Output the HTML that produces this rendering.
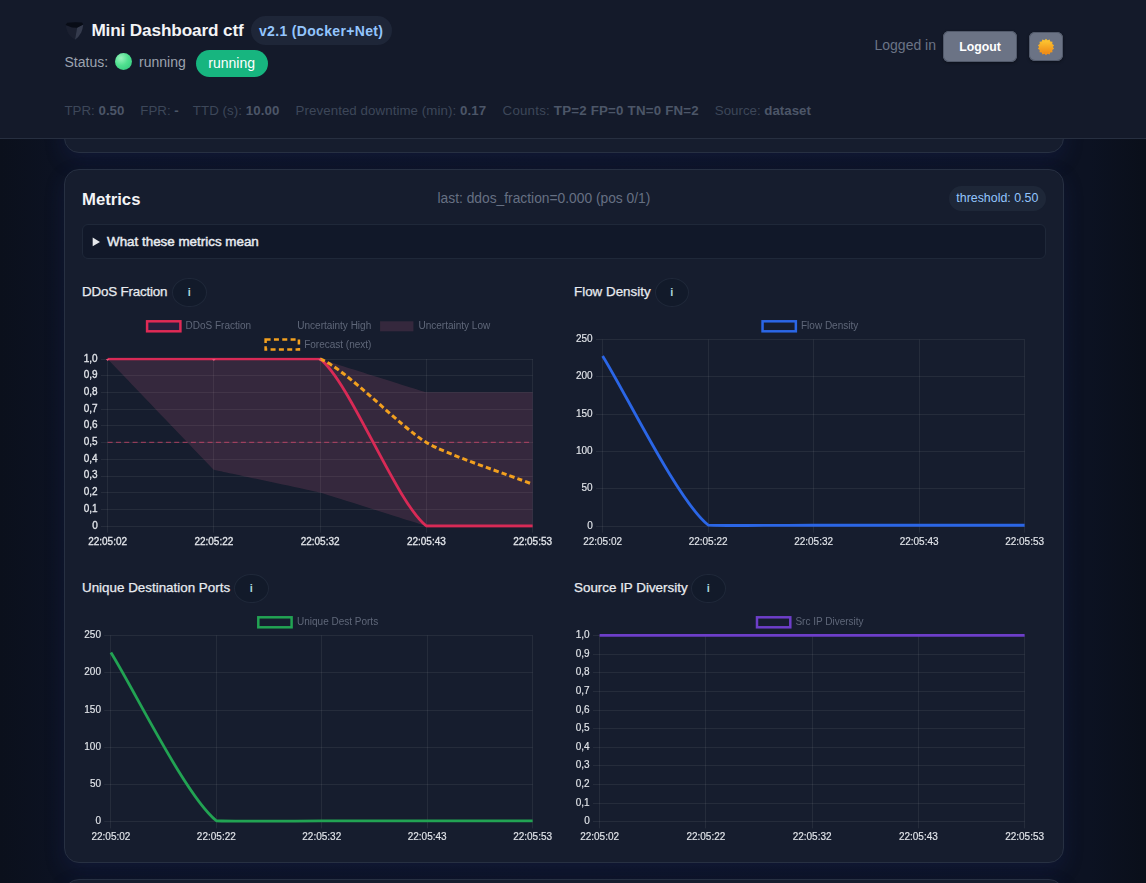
<!DOCTYPE html>
<html lang="en">
<head>
<meta charset="utf-8">
<title>Mini Dashboard ctf</title>
<style>
*{box-sizing:border-box;margin:0;padding:0}
html,body{width:1146px;height:883px;overflow:hidden}
body{position:relative;background:#0c1221;font-family:"Liberation Sans",sans-serif;color:#e5e7eb}
.abs{position:absolute;white-space:nowrap}
#bg{position:absolute;left:0;top:0;width:1146px;height:883px;background:linear-gradient(90deg,#0b101c 0%,#0c1222 5%,#0d1324 50%,#0c1222 95%,#0a0f1a 100%)}
#header{position:absolute;left:0;top:0;width:1146px;height:139px;background:#141a2a;border-bottom:1px solid #272f40}
.card{position:absolute;left:64px;width:1000px;background:#161d2e;border:1px solid #273042;border-radius:15px;box-shadow:0 8px 20px rgba(32,46,120,0.22)}
.abs b{font-weight:700;color:#4c5668}
.st{top:101px;font-size:13.3px;line-height:20px;color:#3d4759}
.ct{font-size:13.4px;line-height:20px;color:#e8ebf0;-webkit-text-stroke:0.25px #e8ebf0}
.ib{width:34.5px;height:29.5px;border-radius:50%;background:#121a2a;border:1px solid #1f2839}
.it{width:34.5px;text-align:center;font-size:11px;line-height:20px;color:#a9d4dc;font-weight:700}
</style>
</head>
<body>
<div id="bg"></div>
<div class="card" style="top:100px;height:53px"></div>
<div class="card" id="metrics" style="top:169px;height:694px"></div>
<div class="card" style="top:879px;height:60px"></div>
<div id="header"></div>
<div id="hdr">
<svg class="abs" style="left:64px;top:20px" width="21" height="21" viewBox="0 0 21 21"><path d="M1.6,5 L13.2,7.2 L11,19.8 Q5.5,16.5 3.6,12 Q2.2,8.5 1.6,5Z" fill="#1b2030"/><path d="M13.2,7.2 L19.3,4.6 Q18.8,9 17.2,12.6 Q15,17 11,19.8Z" fill="#353b4d"/><path d="M1.6,5 L3.2,2.8 Q10.5,1.6 18,2.6 L19.3,4.6 L13.2,7.8 L8,7.4Z" fill="#080c16"/></svg>
<div class="abs" id="title" style="left:91.4px;top:20px;font-size:17.2px;letter-spacing:-0.14px;font-weight:700;line-height:20px;color:#f3f4f6">Mini Dashboard ctf</div>
<div class="abs" id="vpill" style="left:251px;top:16px;width:141px;height:29px;border-radius:15px;background:#1e2638"></div>
<div class="abs" id="vtext" style="left:259px;top:21px;font-size:14px;letter-spacing:0.33px;font-weight:700;line-height:20px;color:#93c5fd">v2.1 (Docker+Net)</div>
<div class="abs" id="status" style="left:64.5px;top:52px;font-size:14px;line-height:20px;color:#9ca3af">Status:</div>
<div class="abs" id="dot" style="left:114.5px;top:52.5px;width:17px;height:17px;border-radius:50%;background:radial-gradient(circle at 35% 30%,#9af3bd 0%,#4fe08f 45%,#2fc47a 100%)"></div>
<div class="abs" id="run1" style="left:139px;top:52px;font-size:14px;line-height:20px;color:#9ca3af">running</div>
<div class="abs" id="gpill" style="left:196px;top:50px;width:72px;height:27px;border-radius:14px;background:#17b57f"></div>
<div class="abs" id="run2" style="left:208.3px;top:52.6px;font-size:14px;line-height:20px;color:#fff">running</div>
<div id="stats"><span class="abs st" style="left:64.5px">TPR: <b>0.50</b></span><span class="abs st" style="left:140.3px">FPR: <b>-</b></span><span class="abs st" style="left:192.8px;letter-spacing:0.06px">TTD (s): <b>10.00</b></span><span class="abs st" style="left:295.6px;letter-spacing:0.07px">Prevented downtime (min): <b>0.17</b></span><span class="abs st" style="left:502.6px;letter-spacing:0.21px">Counts: <b>TP=2 FP=0 TN=0 FN=2</b></span><span class="abs st" style="left:714.8px">Source: <b>dataset</b></span></div>
<div class="abs" id="logged" style="left:874.5px;top:35px;font-size:14px;line-height:20px;color:#6b7486">Logged in</div>
<div class="abs" id="logout" style="left:943px;top:31px;width:74px;height:31px;border-radius:6px;background:#6b7385;box-shadow:0 0 0 1px #525a6b inset, 0 1px 3px rgba(0,0,0,.4)"></div>
<div class="abs" id="logouttxt" style="left:943px;top:37px;width:74px;text-align:center;font-size:12.3px;font-weight:700;line-height:20px;color:#fff">Logout</div>
<div class="abs" id="sunbtn" style="left:1029px;top:32px;width:34px;height:29px;border-radius:6px;background:#6b7385;box-shadow:0 0 0 1px #525a6b inset, 0 1px 3px rgba(0,0,0,.4)"></div>
<svg class="abs" style="left:1036.8px;top:37.5px" width="18" height="18" viewBox="-9 -9 18 18"><defs><linearGradient id="sg" x1="0" y1="0" x2="0" y2="1"><stop offset="0" stop-color="#fcc531"/><stop offset="1" stop-color="#ef8a17"/></linearGradient></defs><polygon points="0.00,-8.30 1.54,-6.73 3.60,-7.48 4.30,-5.39 6.49,-5.17 6.22,-2.99 8.09,-1.85 6.90,-0.00 8.09,1.85 6.22,2.99 6.49,5.17 4.30,5.39 3.60,7.48 1.54,6.73 0.00,8.30 -1.54,6.73 -3.60,7.48 -4.30,5.39 -6.49,5.17 -6.22,2.99 -8.09,1.85 -6.90,0.00 -8.09,-1.85 -6.22,-2.99 -6.49,-5.17 -4.30,-5.39 -3.60,-7.48 -1.54,-6.73" fill="url(#sg)"/><circle r="6.3" fill="url(#sg)"/></svg>
</div>
<div id="mc">
<div class="abs" id="mtitle" style="left:82px;top:190px;font-size:16.7px;font-weight:700;line-height:20px;color:#f3f4f6">Metrics</div>
<div class="abs" id="last" style="left:437.5px;top:189px;font-size:13.8px;line-height:20px;color:#667083">last: ddos_fraction=0.000 (pos 0/1)</div>
<div class="abs" id="thpill" style="left:948.5px;top:186px;width:97.5px;height:25px;border-radius:13px;background:#1e2738"></div>
<div class="abs" id="thtext" style="left:956.3px;top:188px;font-size:12.4px;line-height:20px;color:#93c5fd">threshold: 0.50</div>
<div class="abs" id="details" style="left:82px;top:224px;width:964px;height:35px;border-radius:6px;background:#111829;border:1px solid #1f2839"></div>
<svg class="abs" style="left:92px;top:237.3px" width="9" height="10" viewBox="0 0 9 10"><polygon points="0.7,0.5 8,4.9 0.7,9.3" fill="#e5e7eb"/></svg>
<div class="abs" id="what" style="left:107px;top:232px;font-size:13.4px;font-weight:400;-webkit-text-stroke:0.45px #e8ebf0;line-height:20px;color:#e8ebf0">What these metrics mean</div>

<div class="abs ct" id="ct1" style="left:82px;top:281.5px;letter-spacing:-0.2px">DDoS Fraction</div>
<div class="abs ib" style="left:172px;top:277.5px"></div><div class="abs it" style="left:172px;top:282px">i</div>
<div class="abs ct" id="ct2" style="left:574px;top:281.5px">Flow Density</div>
<div class="abs ib" style="left:654.5px;top:277.5px"></div><div class="abs it" style="left:654.5px;top:282px">i</div>
<div class="abs ct" id="ct3" style="left:82px;top:577.5px">Unique Destination Ports</div>
<div class="abs ib" style="left:234px;top:573.5px"></div><div class="abs it" style="left:234px;top:578px">i</div>
<div class="abs ct" id="ct4" style="left:574px;top:577.5px">Source IP Diversity</div>
<div class="abs ib" style="left:691px;top:573.5px"></div><div class="abs it" style="left:691px;top:578px">i</div>
</div>
<svg id="charts" class="abs" style="left:0;top:0;will-change:transform" width="1146" height="883" viewBox="0 0 1146 883">
<style>.tk{font:10px "Liberation Sans",sans-serif;fill:#e2e5ea;stroke:#e2e5ea;stroke-width:.15px}.tkb{stroke:#e2e5ea;stroke-width:.3px}.lg{font:10px "Liberation Sans",sans-serif;fill:#5f6779}</style>
<path d="M100.93,526.50H532.60M100.93,509.50H532.60M100.93,492.50H532.60M100.93,476.50H532.60M100.93,459.50H532.60M100.93,442.50H532.60M100.93,425.50H532.60M100.93,409.50H532.60M100.93,392.50H532.60M100.93,375.50H532.60M100.93,359.50H532.60M107.50,358.90V532.67M213.50,358.90V532.67M320.50,358.90V532.67M426.50,358.90V532.67M532.50,358.90V532.67" stroke="rgba(255,255,255,0.065)" stroke-width="1" fill="none"/>
<path d="M107.60,358.90 C107.60,358.90 213.85,358.90 213.85,358.90 C213.85,358.90 320.10,358.90 320.10,358.90 C320.10,358.90 426.35,392.32 426.35,392.32 C426.35,392.32 532.60,392.32 532.60,392.32 L532.60,526.00 C532.60,526.00 426.35,526.00 426.35,526.00 C426.35,526.00 320.10,492.58 320.10,492.58 C320.10,492.58 213.85,469.69 213.85,469.69 C213.85,469.69 107.60,358.90 107.60,358.90 Z" fill="rgba(236,105,150,0.15)"/>
<path d="M107.6,442.45H532.6" stroke="rgba(235,75,115,0.55)" stroke-width="1.25" stroke-dasharray="5 3.33" fill="none"/>
<clipPath id="cl1"><rect x="105.6" y="357.65" width="429.0" height="170.00"/></clipPath>
<path d="M107.60,358.90 C130.97,358.90 190.47,358.90 213.85,358.90 C237.22,358.90 303.78,358.90 320.10,358.90 C350.53,382.82 395.92,502.08 426.35,526.00 C442.67,526.00 509.23,526.00 532.60,526.00" stroke="#d82a56" stroke-width="2.8" fill="none" stroke-linejoin="round" clip-path="url(#cl1)"/>
<path d="M320.10,358.90 C346.27,369.19 401.01,427.50 426.35,442.45 C447.76,455.07 509.23,475.03 532.60,484.23" stroke="#f2a01f" stroke-width="3" stroke-dasharray="5.3 3.03" fill="none"/>
<path d="M105.80,358.90h3.6l-1.8,2.2z" fill="#e8557a"/>
<path d="M212.05,358.90h3.6l-1.8,2.2z" fill="#e8557a"/>
<path d="M318.30,358.90h3.6l-1.8,2.2z" fill="#e8557a"/>
<text class="tk tkb" x="97.70" y="528.60" text-anchor="end">0</text>
<text class="tk tkb" x="97.70" y="511.89" text-anchor="end">0,1</text>
<text class="tk tkb" x="97.70" y="495.18" text-anchor="end">0,2</text>
<text class="tk tkb" x="97.70" y="478.47" text-anchor="end">0,3</text>
<text class="tk tkb" x="97.70" y="461.76" text-anchor="end">0,4</text>
<text class="tk tkb" x="97.70" y="445.05" text-anchor="end">0,5</text>
<text class="tk tkb" x="97.70" y="428.34" text-anchor="end">0,6</text>
<text class="tk tkb" x="97.70" y="411.63" text-anchor="end">0,7</text>
<text class="tk tkb" x="97.70" y="394.92" text-anchor="end">0,8</text>
<text class="tk tkb" x="97.70" y="378.21" text-anchor="end">0,9</text>
<text class="tk tkb" x="97.70" y="361.50" text-anchor="end">1,0</text>
<text class="tk tkb" x="107.60" y="544.70" text-anchor="middle">22:05:02</text>
<text class="tk tkb" x="213.85" y="544.70" text-anchor="middle">22:05:22</text>
<text class="tk tkb" x="320.10" y="544.70" text-anchor="middle">22:05:32</text>
<text class="tk tkb" x="426.35" y="544.70" text-anchor="middle">22:05:43</text>
<text class="tk tkb" x="532.60" y="544.70" text-anchor="middle">22:05:53</text>
<rect x="147.10" y="321.30" width="33.3" height="10" fill="rgba(150,60,170,0.12)" stroke="#e02a55" stroke-width="2.5"/><text class="lg" x="185.50" y="329.30">DDoS Fraction</text><text class="lg" x="297.30" y="329.30">Uncertainty High</text><rect x="380.10" y="321.30" width="33.3" height="10" fill="rgba(236,105,150,0.15)"/><text class="lg" x="418.50" y="329.30">Uncertainty Low</text><rect x="265.60" y="339.60" width="33.3" height="10" fill="none" stroke="#f2a01f" stroke-width="2.5" stroke-dasharray="5 3.33"/><text class="lg" x="304.20" y="347.60">Forecast (next)</text>
<path d="M595.93,526.50H1024.60M595.93,488.50H1024.60M595.93,451.50H1024.60M595.93,414.50H1024.60M595.93,376.50H1024.60M595.93,339.50H1024.60M602.50,339.50V532.67M708.50,339.50V532.67M813.50,339.50V532.67M919.50,339.50V532.67M1024.50,339.50V532.67" stroke="rgba(255,255,255,0.065)" stroke-width="1" fill="none"/>
<path d="M602.60,355.91 C625.81,393.12 677.75,500.67 708.10,525.03 C724.17,526.00 790.39,525.23 813.60,525.25 C836.81,525.28 895.89,525.25 919.10,525.25 C942.31,525.25 1001.39,525.25 1024.60,525.25" stroke="#2b66e6" stroke-width="2.8" fill="none" stroke-linejoin="round"/>
<text class="tk" x="592.70" y="528.60" text-anchor="end">0</text>
<text class="tk" x="592.70" y="491.30" text-anchor="end">50</text>
<text class="tk" x="592.70" y="454.00" text-anchor="end">100</text>
<text class="tk" x="592.70" y="416.70" text-anchor="end">150</text>
<text class="tk" x="592.70" y="379.40" text-anchor="end">200</text>
<text class="tk" x="592.70" y="342.10" text-anchor="end">250</text>
<text class="tk" x="602.60" y="544.70" text-anchor="middle">22:05:02</text>
<text class="tk" x="708.10" y="544.70" text-anchor="middle">22:05:22</text>
<text class="tk" x="813.60" y="544.70" text-anchor="middle">22:05:32</text>
<text class="tk" x="919.10" y="544.70" text-anchor="middle">22:05:43</text>
<text class="tk" x="1024.60" y="544.70" text-anchor="middle">22:05:53</text>
<rect x="762.55" y="321.30" width="33.3" height="10" fill="none" stroke="#2b66e6" stroke-width="2.5"/><text class="lg" x="801.00" y="329.30">Flow Density</text>
<path d="M104.23,821.50H532.60M104.23,784.50H532.60M104.23,747.50H532.60M104.23,710.50H532.60M104.23,672.50H532.60M104.23,635.50H532.60M110.50,635.40V828.37M216.50,635.40V828.37M321.50,635.40V828.37M427.50,635.40V828.37M532.50,635.40V828.37" stroke="rgba(255,255,255,0.065)" stroke-width="1" fill="none"/>
<path d="M110.90,652.54 C134.09,689.54 186.03,796.53 216.33,820.73 C232.42,821.70 298.56,820.93 321.75,820.95 C344.94,820.98 403.98,820.95 427.18,820.95 C450.37,820.95 509.41,820.95 532.60,820.95" stroke="#22a353" stroke-width="2.8" fill="none" stroke-linejoin="round"/>
<text class="tk" x="101.00" y="824.30" text-anchor="end">0</text>
<text class="tk" x="101.00" y="787.04" text-anchor="end">50</text>
<text class="tk" x="101.00" y="749.78" text-anchor="end">100</text>
<text class="tk" x="101.00" y="712.52" text-anchor="end">150</text>
<text class="tk" x="101.00" y="675.26" text-anchor="end">200</text>
<text class="tk" x="101.00" y="638.00" text-anchor="end">250</text>
<text class="tk" x="110.90" y="840.40" text-anchor="middle">22:05:02</text>
<text class="tk" x="216.33" y="840.40" text-anchor="middle">22:05:22</text>
<text class="tk" x="321.75" y="840.40" text-anchor="middle">22:05:32</text>
<text class="tk" x="427.18" y="840.40" text-anchor="middle">22:05:43</text>
<text class="tk" x="532.60" y="840.40" text-anchor="middle">22:05:53</text>
<rect x="258.30" y="617.30" width="33.3" height="10" fill="none" stroke="#22a353" stroke-width="2.5"/><text class="lg" x="297.00" y="625.30">Unique Dest Ports</text>
<path d="M592.93,821.50H1024.60M592.93,803.50H1024.60M592.93,784.50H1024.60M592.93,765.50H1024.60M592.93,747.50H1024.60M592.93,728.50H1024.60M592.93,710.50H1024.60M592.93,691.50H1024.60M592.93,672.50H1024.60M592.93,654.50H1024.60M592.93,635.50H1024.60M599.50,635.40V828.37M705.50,635.40V828.37M812.50,635.40V828.37M918.50,635.40V828.37M1024.50,635.40V828.37" stroke="rgba(255,255,255,0.065)" stroke-width="1" fill="none"/>
<path d="M599.60,635.40 C622.98,635.40 682.48,635.40 705.85,635.40 C729.23,635.40 788.72,635.40 812.10,635.40 C835.47,635.40 894.97,635.40 918.35,635.40 C941.72,635.40 1001.22,635.40 1024.60,635.40" stroke="#6d3ec9" stroke-width="2.8" fill="none" stroke-linejoin="round"/>
<text class="tk" x="589.70" y="824.30" text-anchor="end">0</text>
<text class="tk" x="589.70" y="805.67" text-anchor="end">0,1</text>
<text class="tk" x="589.70" y="787.04" text-anchor="end">0,2</text>
<text class="tk" x="589.70" y="768.41" text-anchor="end">0,3</text>
<text class="tk" x="589.70" y="749.78" text-anchor="end">0,4</text>
<text class="tk" x="589.70" y="731.15" text-anchor="end">0,5</text>
<text class="tk" x="589.70" y="712.52" text-anchor="end">0,6</text>
<text class="tk" x="589.70" y="693.89" text-anchor="end">0,7</text>
<text class="tk" x="589.70" y="675.26" text-anchor="end">0,8</text>
<text class="tk" x="589.70" y="656.63" text-anchor="end">0,9</text>
<text class="tk" x="589.70" y="638.00" text-anchor="end">1,0</text>
<text class="tk" x="599.60" y="840.40" text-anchor="middle">22:05:02</text>
<text class="tk" x="705.85" y="840.40" text-anchor="middle">22:05:22</text>
<text class="tk" x="812.10" y="840.40" text-anchor="middle">22:05:32</text>
<text class="tk" x="918.35" y="840.40" text-anchor="middle">22:05:43</text>
<text class="tk" x="1024.60" y="840.40" text-anchor="middle">22:05:53</text>
<rect x="757.00" y="617.30" width="33.3" height="10" fill="none" stroke="#6d3ec9" stroke-width="2.5"/><text class="lg" x="795.40" y="625.30">Src IP Diversity</text>
</svg>
</body>
</html>
